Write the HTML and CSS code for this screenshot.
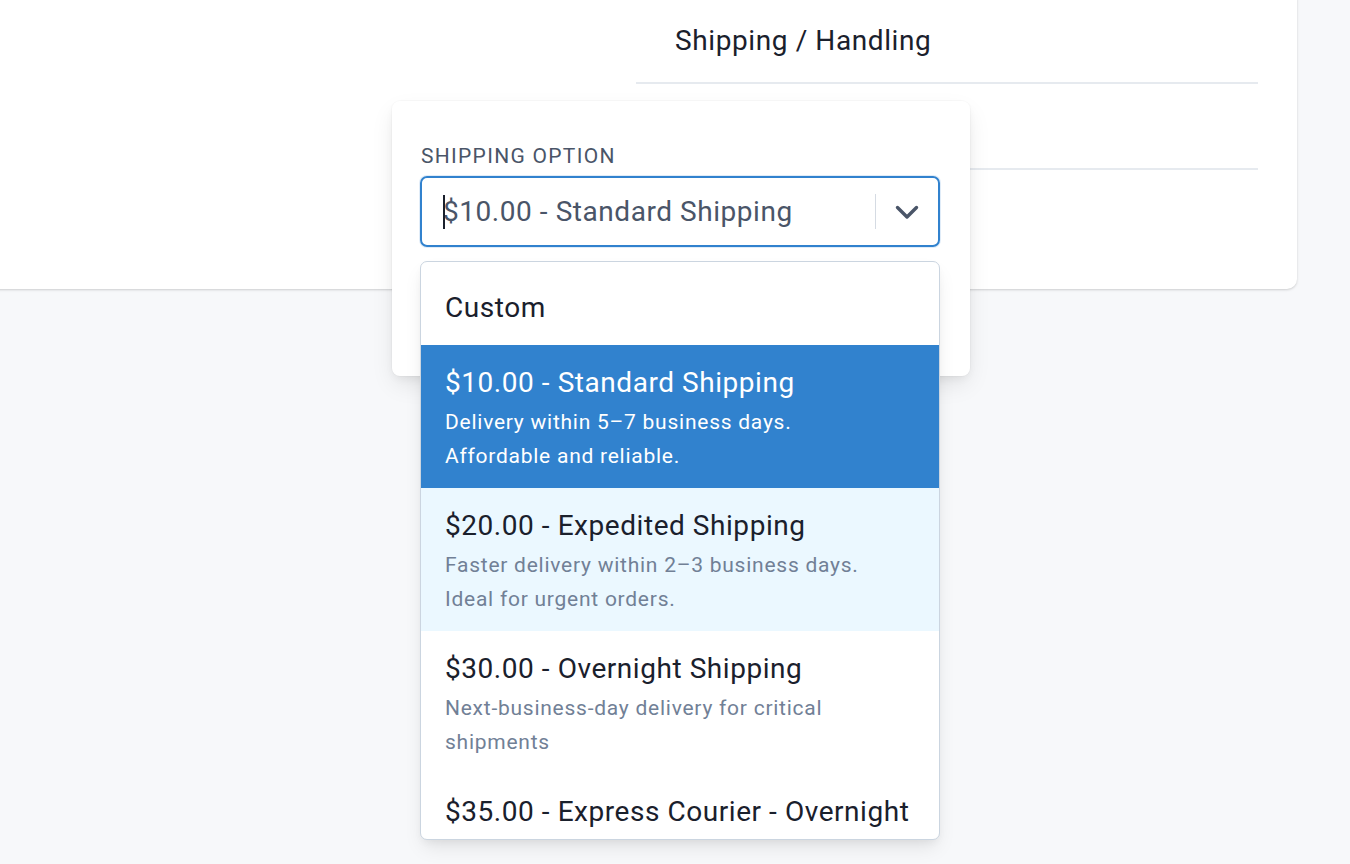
FILE: index.html
```html
<!DOCTYPE html>
<html lang="en">
<head>
<meta charset="utf-8">
<title>Shipping option</title>
<link rel="stylesheet" href="styles.css">
</head>
<body>
<div class="page">
  <div class="card">
    <div class="table">
      <div class="row row-head"><span class="head-cell">Shipping / Handling</span></div>
      <div class="row row-mid"></div>
      <div class="row row-last"></div>
    </div>
  </div>

  <div class="popover">
    <div class="field-label">Shipping Option</div>
    <div class="select-wrap">
      <div class="select">
        <div class="select-value"><span class="caret"></span>$10.00 - Standard Shipping</div>
        <span class="sep"></span>
        <div class="indicator">
          <svg width="24" height="16" viewBox="0 0 24 16" aria-hidden="true"><path d="M2.5 3.5l9.5 9.5 9.5-9.5" fill="none" stroke="#4a5568" stroke-width="3.4" stroke-linecap="round" stroke-linejoin="round"/></svg>
        </div>
      </div>
      <div class="menu">
        <div class="option"><div class="opt-title">Custom</div></div>
        <div class="option selected">
          <div class="opt-title">$10.00 - Standard Shipping</div>
          <div class="opt-desc">Delivery within 5–7 business days.<br>Affordable and reliable.</div>
        </div>
        <div class="option focused">
          <div class="opt-title">$20.00 - Expedited Shipping</div>
          <div class="opt-desc">Faster delivery within 2–3 business days.<br>Ideal for urgent orders.</div>
        </div>
        <div class="option">
          <div class="opt-title">$30.00 - Overnight Shipping</div>
          <div class="opt-desc">Next-business-day delivery for critical<br>shipments</div>
        </div>
        <div class="option">
          <div class="opt-title">$35.00 - Express Courier - Overnight</div>
        </div>
      </div>
    </div>
  </div>
</div>
</body>
</html>
```
FILE: styles.css
```css
* { box-sizing: border-box; }
html, body {
  margin: 0;
  padding: 0;
  background: #f7f8fa;
  font-family: Roboto, "Liberation Sans", Arial, sans-serif;
  color: #1a202c;
}
.page {
  position: relative;
  width: 1350px;
  height: 864px;
  overflow: hidden;
}
.card {
  margin: -12px 0 0 -16px;
  width: 1313px;
  height: 301px;
  background: #ffffff;
  border-radius: 10px;
  box-shadow: 0 1px 3px rgba(0, 0, 0, 0.12), 0 1px 2px rgba(0, 0, 0, 0.06);
  display: flex;
  justify-content: flex-end;
  padding-right: 39px;
}
.table {
  width: 622px;
  display: flex;
  flex-direction: column;
}
.row-head {
  height: 96px;
  padding: 12px 0 0 39px;
  border-bottom: 2px solid #e6eaef;
}
.head-cell {
  display: block;
  font-size: 28px;
  letter-spacing: 0.6px;
  line-height: 82px;
  color: #1a202c;
}
.row-mid {
  height: 86px;
  border-bottom: 2px solid #e6eaef;
}
.row-last { flex: 1; }

.popover {
  position: absolute;
  left: 392px;
  top: 101px;
  width: 578px;
  height: 275px;
  background: #ffffff;
  border-radius: 8px;
  box-shadow: 0 10px 25px -3px rgba(0, 0, 0, 0.10), 0 4px 10px -2px rgba(0, 0, 0, 0.06), 0 0 0 1px rgba(0, 0, 0, 0.02);
  padding: 43px 30px 0 28px;
}
.field-label {
  font-size: 21px;
  line-height: 24px;
  letter-spacing: 1.3px;
  text-transform: uppercase;
  color: #4a5568;
  padding-left: 1px;
  margin-bottom: 8px;
}
.select-wrap { position: relative; }
.select {
  height: 71px;
  border: 2px solid #3182ce;
  border-radius: 7px;
  display: flex;
  align-items: center;
  box-shadow: 0 0 0 1px rgba(49, 130, 206, 0.15);
}
.select-value {
  flex: 1;
  position: relative;
  padding-left: 21px;
  font-size: 28px;
  letter-spacing: 0.55px;
  line-height: 36px;
  color: #4a5568;
}
.caret {
  position: absolute;
  left: 21px;
  top: 1px;
  width: 1.5px;
  height: 34px;
  background: #1a202c;
}
.sep {
  width: 1.5px;
  height: 35px;
  background: #d5dbe3;
}
.indicator {
  width: 62px;
  display: flex;
  justify-content: center;
  align-items: center;
}
.indicator svg { display: block; }

.menu {
  position: absolute;
  left: 0;
  right: 0;
  top: calc(100% + 14px);
  height: 579px;
  overflow: hidden;
  background: #ffffff;
  border: 1px solid #cbd5e0;
  border-radius: 7px;
  padding-top: 8px;
  box-shadow: 0 10px 20px -4px rgba(0, 0, 0, 0.10), 0 4px 8px -2px rgba(0, 0, 0, 0.05);
}
.option {
  padding: 18px 24px 17px 24px;
}
.opt-title {
  font-size: 28px;
  letter-spacing: 0.55px;
  line-height: 40px;
  color: #1a202c;
}
.opt-desc {
  margin-top: 2px;
  margin-bottom: -2px;
  font-size: 21px;
  letter-spacing: 0.75px;
  line-height: 34px;
  color: #718096;
}
.option.selected { background: #3182ce; }
.option.selected .opt-title,
.option.selected .opt-desc { color: #ffffff; }
.option.focused { background: #ebf8ff; }
```
